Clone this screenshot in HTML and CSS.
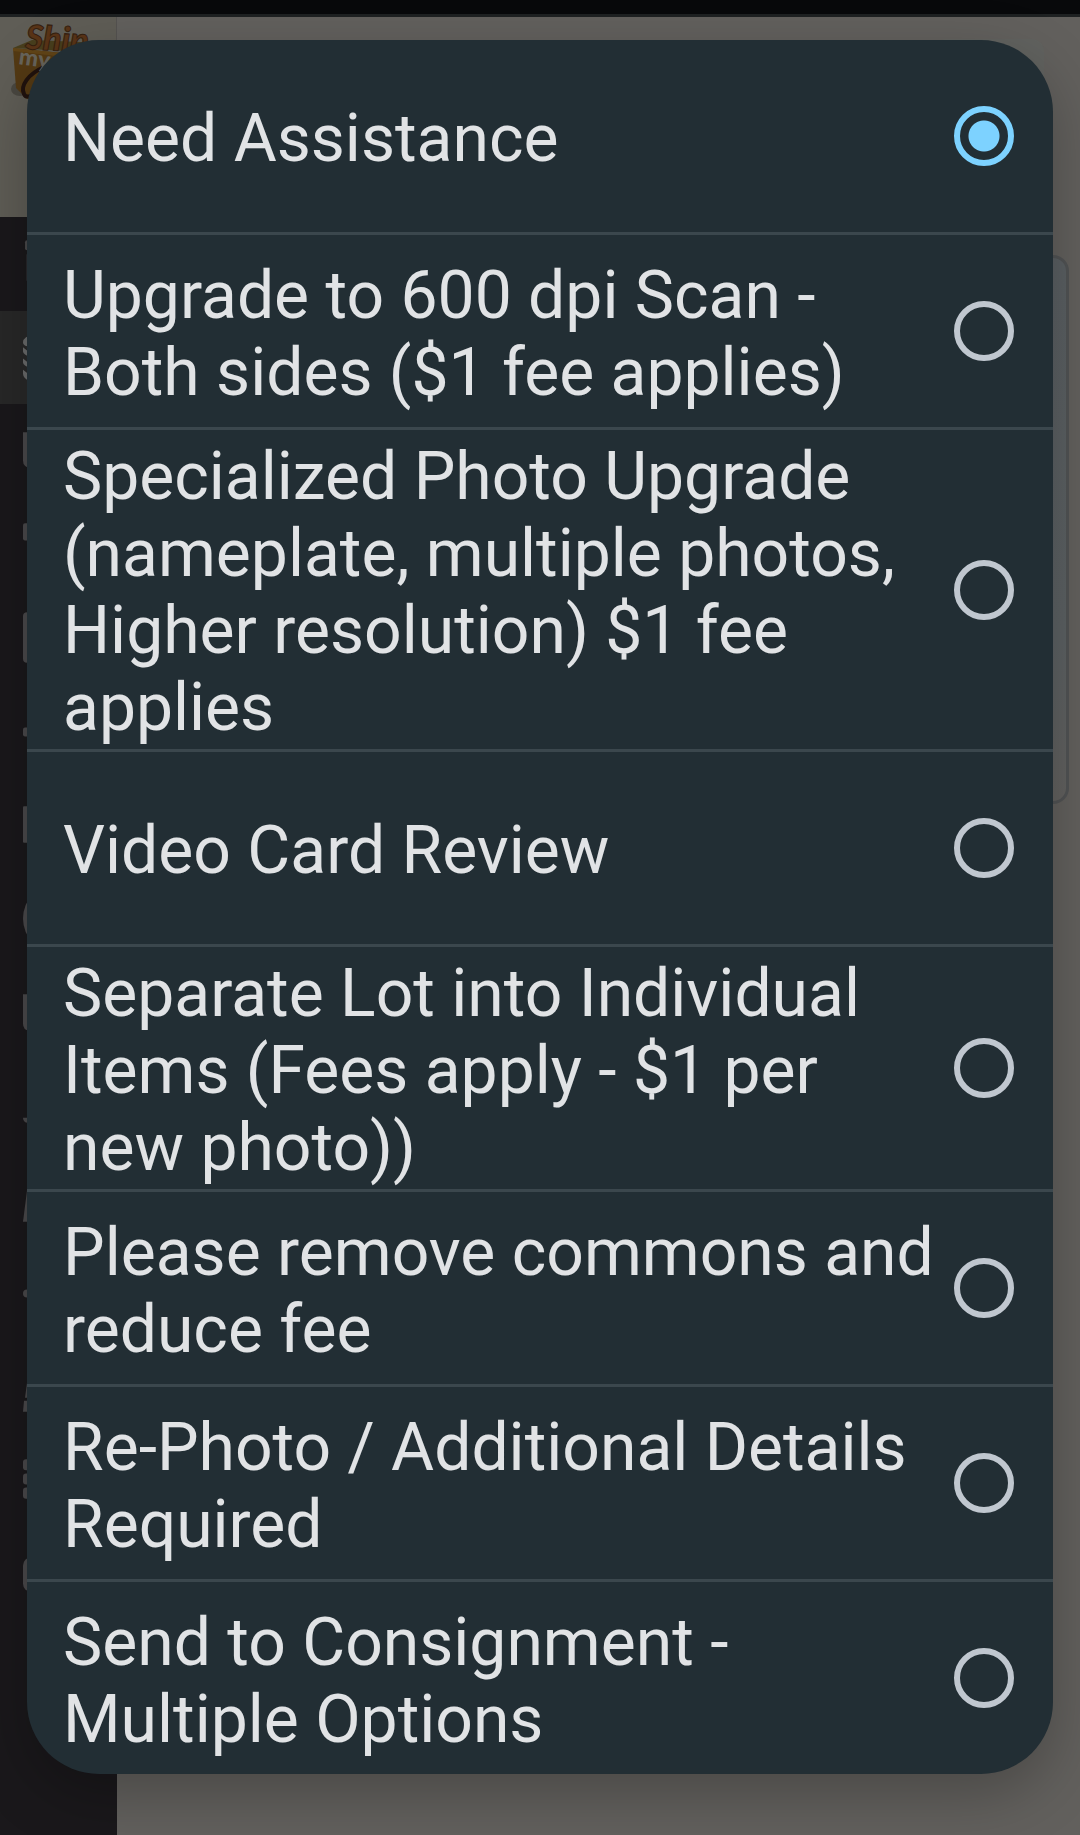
FILE: index.html
```html
<!DOCTYPE html>
<html lang="en">
<head>
  <meta charset="UTF-8">
  <meta name="viewport" content="width=device-width, initial-scale=1.0">
  <title>Ship My Cards</title>
  <link rel="stylesheet" href="styles.css">
</head>
<body>
  <!-- Dimmed page behind the picker -->
  <div class="page">
    <div class="top-bar"></div>
    <div class="columns">
      <div class="sidebar">
        <div class="logo">
          <svg width="117" height="100" viewBox="0 0 117 100">
            <ellipse cx="20" cy="72" rx="9" ry="7" fill="#494740"/>
            <path d="M13 31 L32 23 L104 26 L82 35 Z" fill="#483e1d"/>
            <path d="M13 31 L82 38 L78 88 L27 82 L16 71 Z" fill="#533913"/>
            <path d="M13 31 L82 38 L82 42 L13 34 Z" fill="#614417"/>
            <path d="M44 50 C28 57 20 69 24 77 C26 82 33 79 38 74" fill="none" stroke="#20120d" stroke-width="4"/>
            <text class="logo-ship" x="25" y="32" transform="rotate(3 25 32)">Ship</text>
            <text class="logo-my" x="18" y="47" transform="rotate(8 18 47)">my</text>
          </svg>
        </div>
        <div class="nav">
          <div class="nav-item"><svg viewBox="0 0 70 70"><path d="M4 12h62v10H4a2 2 0 0 1-2-2v-6a2 2 0 0 1 2-2z"/><path d="M3 26h60v26H3z" opacity=".3"/></svg></div>
          <div class="nav-item active"><svg viewBox="0 0 70 70"><path d="M12 12h46a12 6 0 0 1 0 12H4q-4-1-4-4 0-6 12-8zM0 25l10 8h50v2H8q-8-3-8-6zM0 36l10 8h50v2H8q-8-3-8-6zM0 47l10 8h50v4H8q-8-3-8-8z"/></svg></div>
          <div class="nav-item"><svg viewBox="0 0 70 70"><path d="M0 17h70v28q0 8-8 8H8q-8-2-8-8z"/></svg></div>
          <div class="nav-item"><svg viewBox="0 0 70 70"><path d="M2 14h66v17H2q-2 0-2-2V16q0-2 2-2z"/></svg></div>
          <div class="nav-item"><svg viewBox="0 0 70 70"><rect y="10" width="70" height="50" rx="4"/></svg></div>
          <div class="nav-item"><svg viewBox="0 0 70 70"><rect y="31" width="70" height="9" rx="2"/></svg></div>
          <div class="nav-item"><svg viewBox="0 0 70 70"><rect y="17" width="70" height="36" rx="1"/></svg></div>
          <div class="nav-item"><svg viewBox="0 0 70 70"><circle cx="35" cy="35" r="35"/></svg></div>
          <div class="nav-item"><svg viewBox="0 0 70 70"><path d="M0 17h70v30q0 6-6 6H6q-6-1-6-7z"/></svg></div>
          <div class="nav-item"><svg viewBox="0 0 70 70"><path d="M0 47h70v5H4q-4-1-4-5z"/></svg></div>
          <div class="nav-item"><svg viewBox="0 0 70 70"><path d="M4 26L8 12h54l8 45H0z"/></svg></div>
          <div class="nav-item"><svg viewBox="0 0 70 70"><rect y="32" width="70" height="8" rx="4"/></svg></div>
          <div class="nav-item"><svg viewBox="0 0 70 70"><path d="M2 46L6 16h56l6 30zM1 49h69v11H0z"/></svg></div>
          <div class="nav-item"><svg viewBox="0 0 70 70"><rect y="15" width="18" height="11" rx="3"/><rect y="29" width="18" height="11" rx="3"/><rect y="43" width="18" height="11" rx="3"/></svg></div>
          <div class="nav-item"><svg viewBox="0 0 70 70"><rect y="19" width="70" height="34" rx="8"/></svg></div>
        </div>
      </div>
      <div class="content">
        <div class="menu-box"></div>
        <div class="card"></div>
      </div>
    </div>
  </div>

  <!-- Option picker -->
  <div class="overlay">
    <form class="picker">
      <label class="option">
        <span class="option-text">Need Assistance</span>
        <input type="radio" name="service" value="assistance" checked>
      </label>
      <label class="option">
        <span class="option-text">Upgrade to 600 dpi Scan - Both sides ($1 fee applies)</span>
        <input type="radio" name="service" value="scan">
      </label>
      <label class="option">
        <span class="option-text">Specialized Photo Upgrade (nameplate, multiple photos, Higher resolution) $1 fee applies</span>
        <input type="radio" name="service" value="photo">
      </label>
      <label class="option">
        <span class="option-text">Video Card Review</span>
        <input type="radio" name="service" value="video">
      </label>
      <label class="option">
        <span class="option-text">Separate Lot into Individual Items (Fees apply - $1 per new photo))</span>
        <input type="radio" name="service" value="separate">
      </label>
      <label class="option">
        <span class="option-text">Please remove commons and reduce fee</span>
        <input type="radio" name="service" value="commons">
      </label>
      <label class="option">
        <span class="option-text">Re-Photo / Additional Details Required</span>
        <input type="radio" name="service" value="rephoto">
      </label>
      <label class="option">
        <span class="option-text">Send to Consignment - Multiple Options</span>
        <input type="radio" name="service" value="consignment">
      </label>
    </form>
  </div>
</body>
</html>
```
FILE: styles.css
```css
* {
  box-sizing: border-box;
}
body {
  margin: 0;
  font-family: Roboto, sans-serif;
  background-color: #62605d;
}
.page {
  display: flex;
  flex-direction: column;
  min-height: 100vh;
}
.top-bar {
  height: 17px;
  background-color: #08090b;
  border-bottom: 3px solid #1e2122;
}
.columns {
  display: flex;
  flex: 1;
}
.sidebar {
  width: 117px;
  background-color: #1a181b;
}
.logo {
  height: 200px;
  background-color: #5f5d56;
  border-right: 1px solid #545250;
}
.logo svg {
  display: block;
}
.logo-ship {
  font: italic 900 34px Lato, sans-serif;
  fill: #593417;
  stroke: #35200f;
  stroke-width: 1px;
}
.logo-my {
  font: 900 23px Lato, sans-serif;
  fill: #67645b;
}
.nav {
  display: flex;
  flex-direction: column;
  height: 1403px;
}
.nav-item {
  flex: 1;
  display: flex;
  align-items: center;
  justify-content: center;
}
.nav-item.active {
  background-color: #282828;
}
.nav-item svg {
  width: 71px;
  height: 71px;
  fill: #4a494b;
}
.nav-item.active svg {
  fill: #6a6b6b;
}
.content {
  flex: 1;
  padding: 22px 11px;
}
.menu-box {
  width: 110px;
  height: 110px;
  margin: 0 25px 106px auto;
  border-radius: 12px;
  background-color: #61625f;
}
.card {
  height: 549px;
  border: 3px solid #515354;
  border-radius: 16px;
  background: linear-gradient(#5a5f62, #5c6163 70%, #62615f);
}

/* Picker sits over the page */
.overlay {
  position: absolute;
  top: 0;
  left: 0;
  right: 0;
  padding: 40px 27px;
}
.picker {
  overflow: hidden;
  border-radius: 72px;
  background-color: #222e34;
  box-shadow: 0 20px 60px rgba(0, 0, 0, 0.25);
}
.option {
  display: flex;
  align-items: center;
  min-height: 192px;
  padding: 0 39px 0 36px;
  cursor: pointer;
}
.option + .option {
  min-height: 195px;
  border-top: 3px solid #3b474d;
}
.option-text {
  flex: 1;
  padding: 8px 0 3px;
  margin-right: 12px;
  font-size: 66px;
  line-height: 77px;
  color: #e1e3e5;
}
.option input {
  appearance: none;
  flex: none;
  width: 60px;
  height: 60px;
  margin: 0;
  border: 6px solid #c0c7cf;
  border-radius: 50%;
  cursor: pointer;
}
.option input:checked {
  border-color: #7dd2ff;
  background: radial-gradient(circle, #7dd2ff 15px, transparent 16px);
}
```
